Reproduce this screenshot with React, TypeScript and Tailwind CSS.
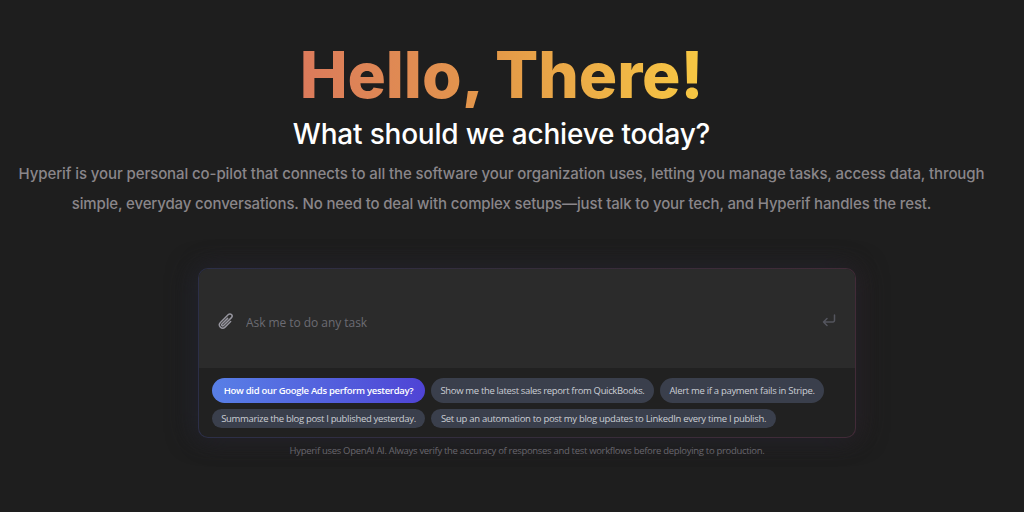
import React, { useState } from 'react';

const rows = [
  [
    { text: 'How did our Google Ads perform yesterday?', width: 'w-[213px]', tracking: 'tracking-[-0.3px]' },
    { text: 'Show me the latest sales report from QuickBooks.', width: 'w-[223px]', tracking: 'tracking-[-0.35px]' },
    { text: 'Alert me if a payment fails in Stripe.', width: 'w-[164px]', tracking: 'tracking-[-0.31px]' },
  ],
  [
    { text: 'Summarize the blog post I published yesterday.', width: 'w-[213px]', tracking: 'tracking-[-0.33px]' },
    { text: 'Set up an automation to post my blog updates to LinkedIn every time I publish.', width: 'w-[345px]', tracking: 'tracking-[-0.3px]' },
  ],
];

function App() {
  const [prompt, setPrompt] = useState('');

  return (
    <div className="h-[512px] w-[1024px] overflow-hidden bg-[#1e1e1e] font-['Open_Sans','Noto_Sans',sans-serif]">
      <header className="flex w-[1003px] flex-col items-center pt-[41px] font-['Inter',sans-serif] whitespace-nowrap">
        <h1 className="bg-gradient-to-r from-[#db7a5b] via-[#e49a48] to-[#f7c843] bg-clip-text text-[64px] leading-[67px] font-extrabold tracking-[-0.1px] text-transparent">
          Hello, There!
        </h1>
        <h2 className="mt-[8px] text-[28px] leading-[36px] font-medium tracking-[-0.2px] text-white">
          What should we achieve today?
        </h2>
        <p className="mt-[7px] text-center text-[15px] leading-[30px] font-medium tracking-[-0.095px] text-[#8a868a]">
          Hyperif is your personal co-pilot that connects to all the software your organization uses, letting you manage tasks, access data, through
          <br />
          <span className="tracking-[-0.14px]">
            simple, everyday conversations. No need to deal with complex setups—just talk to your tech, and Hyperif handles the rest.
          </span>
        </p>
      </header>

      <main className="mt-[49px] ml-[198px] w-[658px]">
        <div className="rounded-[10px] bg-gradient-to-r from-[#2c2f48] via-[#352d3b] to-[#422b38] p-px shadow-[-6px_0_24px_#20222b,6px_0_24px_#272023]">
          <div className="h-[168px] overflow-hidden rounded-[9px] bg-[#212121]">
            <div className="flex h-[99px] items-center bg-[#2b2b2b] px-[19px]">
              <svg className="mt-[4px] h-[18px] w-[16px] text-[#96959e]" viewBox="1 1 22 22" fill="none" stroke="currentColor" strokeWidth="2" strokeLinecap="round" strokeLinejoin="round">
                <path d="m18.375 12.739-7.693 7.693a4.5 4.5 0 0 1-6.364-6.364l10.94-10.94A3 3 0 1 1 19.5 7.372L8.552 18.32m.009-.01-.01.01m5.699-9.941-7.81 7.81a1.5 1.5 0 0 0 2.112 2.13" />
              </svg>
              <input
                value={prompt}
                onChange={(e) => setPrompt(e.target.value)}
                placeholder="Ask me to do any task"
                className="mt-[9px] ml-[12px] w-[500px] bg-transparent text-[12px] tracking-[-0.05px] text-[#aaa] outline-none placeholder:text-[#6c6c73]"
              />
              <svg className="mt-[4px] ml-auto h-[14px] w-[14px] text-[#54555e]" viewBox="0 0 14 14" fill="none" stroke="currentColor" strokeWidth="1.5" strokeLinecap="round" strokeLinejoin="round">
                <path d="M12.5 1v5.5A1.5 1.5 0 0 1 11 8H1.5M5 4.5 1.5 8 5 11.5" />
              </svg>
            </div>
            <div className="flex flex-col gap-[6px] pt-[10px] pl-[13px]">
              {rows.map((row, r) => (
                <div key={r} className="flex gap-[6px] whitespace-nowrap">
                  {row.map((item, i) => (
                    <button
                      key={item.text}
                      onClick={() => setPrompt(item.text)}
                      className={`${item.width} ${item.tracking} ${r === 0 ? 'h-[25px]' : 'h-[19px]'} flex items-center justify-center rounded-full pt-[2px] text-[9.5px] ${
                        r === 0 && i === 0
                          ? 'bg-gradient-to-r from-[#587fe6] to-[#4f43d5] font-semibold text-white'
                          : 'bg-[#3a3f4c] text-[#cbced4]'
                      }`}
                    >
                      {item.text}
                    </button>
                  ))}
                </div>
              ))}
            </div>
          </div>
        </div>
        <p className="mt-[5px] text-center text-[9.5px] leading-[16px] tracking-[-0.31px] whitespace-nowrap text-[#68666d]">
          Hyperif uses OpenAI AI. Always verify the accuracy of responses and test workflows before deploying to production.
        </p>
      </main>
    </div>
  );
}

export default App;
